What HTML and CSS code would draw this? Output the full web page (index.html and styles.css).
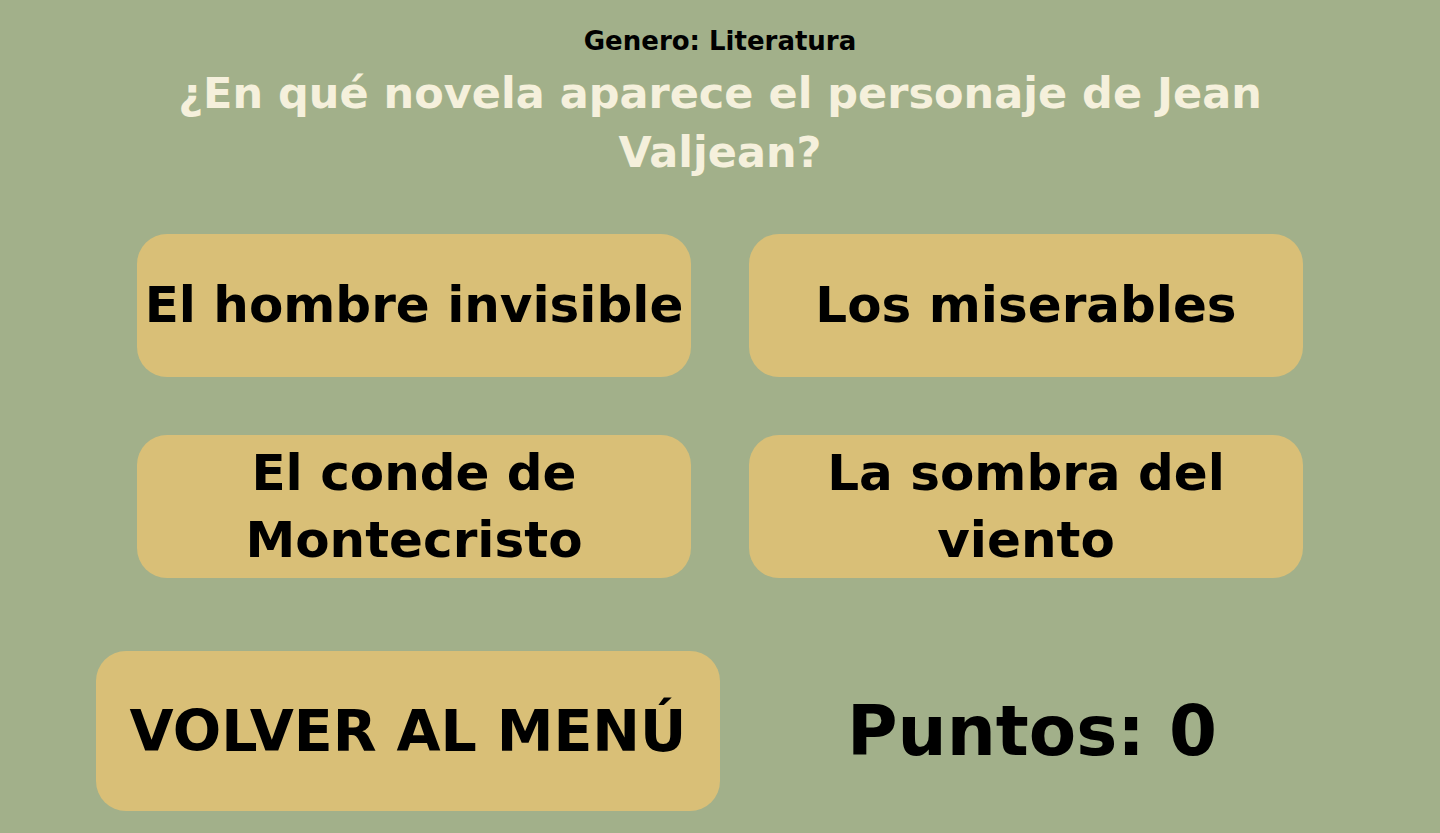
FILE: index.html
```html
<!DOCTYPE html>
<html lang="es">
<head>
  <meta charset="UTF-8" />
  <meta name="viewport" content="width=device-width, initial-scale=1.0"/>
  <title>Trivia - Pregunta</title>
  <link rel="stylesheet" href="styles.css">
</head>
<body>

<div class="game">
  <div class="question-box">
    <h3 class="genre">Genero: Literatura</h3>
    <h1 class="question">¿En qué novela aparece el personaje de Jean Valjean?</h1>
  </div>

  <div class="answers">
    <button type="button" class="answer">El hombre invisible</button>
    <button type="button" class="answer">Los miserables</button>
    <button type="button" class="answer">El conde de Montecristo</button>
    <button type="button" class="answer">La sombra del viento</button>
  </div>

  <div class="bottom-bar">
    <button type="button" class="btn-menu">VOLVER AL MENÚ</button>
    <div class="score">Puntos: 0</div>
  </div>
</div>

</body>
</html>
```

FILE: styles.css
```css
* {
  box-sizing: border-box;
  font-family: 'DejaVu Sans', 'Liberation Sans', sans-serif;
}

body {
  margin: 0;
  padding: 0;
  background: #a2b08a;
  color: #000;
}

.game {
  width: 1440px;
  margin: 0 auto;
}

.question-box {
  width: 1166px;
  margin: 0 auto;
  padding-top: 24px;
  text-align: center;
}

.genre {
  margin: 0;
  font-size: 26px;
  line-height: 34px;
  font-weight: bold;
}

.question {
  margin: 6px 0 0;
  font-size: 43px;
  line-height: 59px;
  font-weight: bold;
  color: #f5f0dc;
}

.answers {
  display: grid;
  grid-template-columns: 554px 554px;
  grid-auto-rows: 143px;
  gap: 58px;
  justify-content: center;
  margin-top: 52px;
}

.answer,
.btn-menu {
  background: #d9bf77;
  border: none;
  border-radius: 30px;
  color: #000;
  font-weight: bold;
  cursor: pointer;
  padding: 0 2px;
}

.answer {
  font-size: 50px;
  line-height: 67px;
}

.bottom-bar {
  display: flex;
  align-items: center;
  padding: 0 96px;
  margin-top: 73px;
}

.btn-menu {
  width: 624px;
  height: 160px;
  font-size: 57px;
}

.score {
  flex: 1;
  text-align: center;
  font-size: 69px;
  font-weight: bold;
}
```
